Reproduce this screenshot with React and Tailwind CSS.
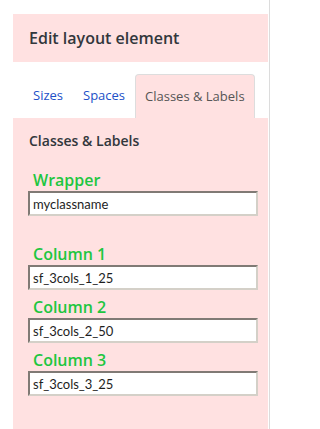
import React from "react";

const fields = [
    { label: "Wrapper", value: "myclassname", gap: "mt-[18px]" },
    { label: "Column 1", value: "sf_3cols_1_25", gap: "mt-[27px]" },
    { label: "Column 2", value: "sf_3cols_2_50", gap: "mt-[6px]" },
    { label: "Column 3", value: "sf_3cols_3_25", gap: "mt-[6px]" },
];

export default function App() {
    return (
        <div className="h-[429px] w-[270px] border-r border-[#dcdcdc] bg-white pl-[13px] pr-[1px] pt-[14px] font-['Open_Sans',sans-serif]">
            <div className="flex h-full flex-col">
                {/* Header */}
                <div className="flex h-[48px] items-center bg-[#ffe1e1] px-[16px]">
                    <h2 className="text-[16px] font-semibold leading-none text-[#32373c]">Edit layout element</h2>
                </div>

                {/* Tabs */}
                <div className="flex h-[56px] items-end bg-white pl-[10px]">
                    <button type="button" className="flex h-[44px] items-center px-[10px] text-[13px] text-[#2150c8]">
                        Sizes
                    </button>
                    <button type="button" className="flex h-[44px] items-center px-[10px] text-[13px] text-[#2150c8]">
                        Spaces
                    </button>
                    <button
                        type="button"
                        className="flex h-[44px] w-[120px] items-center rounded-t-[4px] border border-b-0 border-[#dddddd] bg-[#ffe1e1] pl-[9px] text-[13px] text-[#555555]"
                    >
                        Classes &amp; Labels
                    </button>
                </div>

                {/* Content */}
                <div className="flex-1 bg-[#ffe1e1] pl-[15px] pr-[10px] pt-[13px]">
                    <h3 className="pl-[1px] text-[14px] font-semibold leading-[20px] text-[#32373c]">Classes &amp; Labels</h3>

                    {fields.map((f) => (
                        <div key={f.label} className={f.gap}>
                            <label className="block pl-[5px] text-[16px] font-semibold leading-[22px] text-[#1ec640]">
                                {f.label}
                            </label>
                            <input
                                type="text"
                                defaultValue={f.value}
                                className="block h-[25px] w-[230px] border-2 border-t-[#807a75] border-l-[#807a75] border-b-[#d4d0c8] border-r-[#d4d0c8] bg-white px-[3px] font-['Lato',sans-serif] text-[13px] text-[#1e1e1e] outline-none"
                            />
                        </div>
                    ))}
                </div>
            </div>
        </div>
    );
}
